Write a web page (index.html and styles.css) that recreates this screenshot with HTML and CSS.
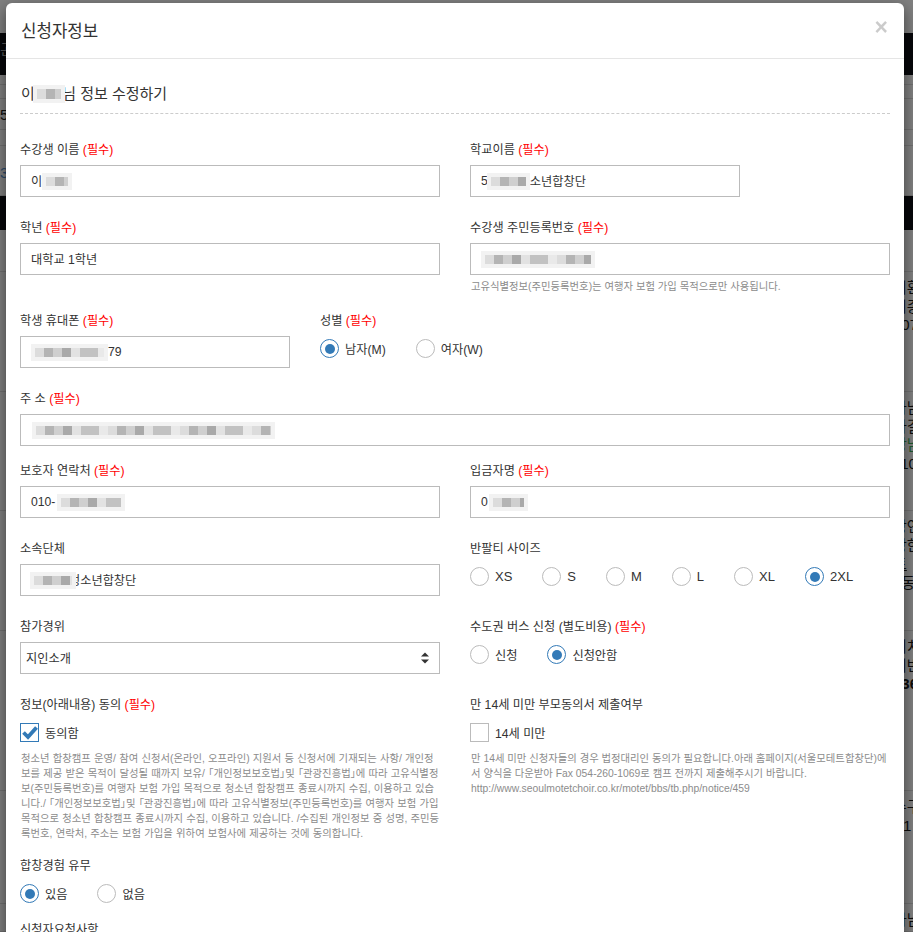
FILE: index.html
```html
<!DOCTYPE html>
<html lang="ko">
<head>
    <meta charset="UTF-8">
    <meta name="viewport" content="width=device-width, initial-scale=1.0">
    <title>신청자정보</title>
    <link rel="stylesheet" href="styles.css">
</head>
<body>
    <!-- dimmed page behind the modal -->
    <div class="backdrop">
        <div class="back-row h33"></div>
        <div class="back-bar h42"><span>곤</span></div>
        <div class="back-row h10"></div>
        <div class="back-row h14"></div>
        <div class="back-row h31"><span>5</span></div>
        <div class="back-row h16"></div>
        <div class="back-row h50"><span class="blue">3</span></div>
        <div class="back-bar h34"></div>
        <div class="back-row h42"></div>
        <div class="back-row h120"><span></span><span>기환<br>이종<br>207</span></div>
        <div class="back-row h119"><span></span><span>가남<br>사결<br><b class="green">강남</b><br>110</span></div>
        <div class="back-row h120"><span></span><span>강연<br>방한<br><u>트</u><br>3동</span></div>
        <div class="back-row h160"><span></span><span>위치<br>기반<br><b>236</b></span></div>
        <div class="back-row h113"><span></span><span>수구<br>--1</span></div>
        <div class="back-row h28"><span></span><span>가남</span></div>
    </div>

    <div class="modal">
        <div class="modal-header">
            <h4>신청자정보</h4>
            <button class="close" type="button">×</button>
        </div>
        <div class="modal-body">
            <h5 class="form-title">이<span class="mask mask-title"></span>님 정보 수정하기</h5>

            <div class="row">
                <div class="field">
                    <label>수강생 이름 <em>(필수)</em></label>
                    <div class="input">이<span class="mask mask-name"></span></div>
                </div>
                <div class="field">
                    <label>학교이름 <em>(필수)</em></label>
                    <div class="input short">5<span class="mask mask-school"></span>소년합창단</div>
                </div>
            </div>

            <div class="row tight">
                <div class="field">
                    <label>학년 <em>(필수)</em></label>
                    <div class="input">대학교 1학년</div>
                </div>
                <div class="field">
                    <label>수강생 주민등록번호 <em>(필수)</em></label>
                    <div class="input"><span class="mask mask-rrn"></span></div>
                    <p class="help">고유식별정보(주민등록번호)는 여행자 보험 가입 목적으로만 사용됩니다.</p>
                </div>
            </div>

            <div class="row phone-row">
                <div class="field">
                    <label>학생 휴대폰 <em>(필수)</em></label>
                    <div class="input"><span class="mask mask-phone"></span>79</div>
                </div>
                <div class="field">
                    <label>성별 <em>(필수)</em></label>
                    <div class="options">
                        <span class="option"><i class="radio on"></i>남자(M)</span>
                        <span class="option"><i class="radio"></i>여자(W)</span>
                    </div>
                </div>
            </div>

            <div class="row single address-row">
                <div class="field">
                    <label>주 소 <em>(필수)</em></label>
                    <div class="input"><span class="mask mask-address"></span></div>
                </div>
            </div>

            <div class="row">
                <div class="field">
                    <label>보호자 연락처 <em>(필수)</em></label>
                    <div class="input">010-<span class="mask mask-contact"></span></div>
                </div>
                <div class="field">
                    <label>입금자명 <em>(필수)</em></label>
                    <div class="input">0<span class="mask mask-payer"></span></div>
                </div>
            </div>

            <div class="row">
                <div class="field">
                    <label>소속단체</label>
                    <div class="input masked-first"><span class="mask mask-org"></span>청소년합창단</div>
                </div>
                <div class="field">
                    <label>반팔티 사이즈</label>
                    <div class="options sizes">
                        <span class="option"><i class="radio"></i>XS</span>
                        <span class="option"><i class="radio"></i>S</span>
                        <span class="option"><i class="radio"></i>M</span>
                        <span class="option"><i class="radio"></i>L</span>
                        <span class="option"><i class="radio"></i>XL</span>
                        <span class="option"><i class="radio on"></i>2XL</span>
                    </div>
                </div>
            </div>

            <div class="row">
                <div class="field">
                    <label>참가경위</label>
                    <div class="select-wrap">
                        <select class="input select">
                            <option>지인소개</option>
                        </select>
                        <svg class="select-arrows" width="10" height="12" viewBox="0 0 10 12">
                            <path d="M5 0.5 L9 4.5 H1 Z M1 7.5 H9 L5 11.5 Z" fill="#333"/>
                        </svg>
                    </div>
                </div>
                <div class="field">
                    <label>수도권 버스 신청 (별도비용) <em>(필수)</em></label>
                    <div class="options">
                        <span class="option"><i class="radio"></i>신청</span>
                        <span class="option"><i class="radio on"></i>신청안함</span>
                    </div>
                </div>
            </div>

            <div class="row agree-row">
                <div class="field">
                    <label>정보(아래내용) 동의 <em>(필수)</em></label>
                    <div class="options">
                        <span class="option">
                            <i class="check on">
                                <svg width="17" height="17" viewBox="0 0 17 17">
                                    <path d="M2.5 8.5 L7 13 L15.5 3.5" fill="none" stroke="#337ab7" stroke-width="3.8"/>
                                </svg>
                            </i>동의함
                        </span>
                    </div>
                    <p class="help notice notice-wide">청소년 합창캠프 운영/ 참여 신청서(온라인, 오프라인) 지원서 등 신청서에 기재되는 사항/ 개인정보를 제공 받은 목적이 달성될 때까지 보유/ 「개인정보보호법」및 「관광진흥법」에 따라 고유식별정보(주민등록번호)를 여행자 보험 가입 목적으로 청소년 합창캠프 종료시까지 수집, 이용하고 있습니다./ 「개인정보보호법」및 「관광진흥법」에 따라 고유식별정보(주민등록번호)를 여행자 보험 가입 목적으로 청소년 합창캠프 종료시까지 수집, 이용하고 있습니다. /수집된 개인정보 중 성명, 주민등록번호, 연락처, 주소는 보험 가입을 위하여 보험사에 제공하는 것에 동의합니다.</p>
                </div>
                <div class="field">
                    <label>만 14세 미만 부모동의서 제출여부</label>
                    <div class="options">
                        <span class="option"><i class="check"></i>14세 미만</span>
                    </div>
                    <p class="help notice">만 14세 미만 신청자들의 경우 법정대리인 동의가 필요합니다.아래 홈페이지(서울모테트합창단)에서 양식을 다운받아 Fax 054-260-1069로 캠프 전까지 제출해주시기 바랍니다.<br>http://www.seoulmotetchoir.co.kr/motet/bbs/tb.php/notice/459</p>
                </div>
            </div>

            <div class="row single choir-row">
                <div class="field">
                    <label>합창경험 유무</label>
                    <div class="options">
                        <span class="option"><i class="radio on"></i>있음</span>
                        <span class="option"><i class="radio"></i>없음</span>
                    </div>
                </div>
            </div>

            <div class="row single">
                <div class="field">
                    <label>신청자요청사항</label>
                </div>
            </div>
        </div>
    </div>
</body>
</html>
```

FILE: styles.css
```css
* {
    box-sizing: border-box;
}

html, body {
    height: 100%;
    margin: 0;
    overflow: hidden;
}

body {
    position: relative;
    padding: 3px 9px 0 6px;
    background-color: #808080;
    color: #333333;
    font-family: "Liberation Sans", "Noto Sans CJK KR", sans-serif;
    font-size: 12.2px;
}

/* dimmed page */
.backdrop {
    position: absolute;
    top: 0;
    left: 0;
    width: 100%;
    height: 100%;
    font-size: 15px;
    line-height: 18.7px;
    color: #0d0d0d;
}

.back-row, .back-bar {
    display: flex;
    justify-content: space-between;
    align-items: flex-start;
    overflow: hidden;
}

.back-row {
    border-bottom: 1px solid #707070;
    padding-top: 7px;
}

.back-row span:last-child:not(:first-child) {
    width: 20px;
    white-space: nowrap;
}

.back-bar {
    background-color: #06070a;
    color: #555555;
    padding-top: 8px;
}

.back-row.h33 { border-bottom: none; }

.h10 { height: 10px; padding-top: 0; }
.h14 { height: 14px; padding-top: 0; }
.h16 { height: 16px; padding-top: 0; }
.h28 { height: 28px; }
.h31 { height: 31px; }
.h33 { height: 33px; }
.h34 { height: 34px; }
.h42 { height: 42px; }
.h50 { height: 50px; padding-top: 18px; }
.h113 { height: 113px; }
.h119 { height: 119px; }
.h120 { height: 120px; }
.h160 { height: 160px; }

.blue { color: #2a4a6b; }
.green { color: #1e5a2e; font-weight: normal; }

.modal {
    position: relative;
    background-color: #ffffff;
    border-radius: 6px 6px 0 0;
    box-shadow: 0 5px 15px rgba(0, 0, 0, 0.5);
    height: 1000px;
}

.modal-header {
    display: flex;
    justify-content: space-between;
    align-items: center;
    height: 56px;
    padding: 0 15px 2px;
    border-bottom: 1px solid #e5e5e5;
}

.modal-header h4 {
    margin: 0;
    font-size: 16.8px;
    font-weight: normal;
}

.close {
    border: none;
    background: none;
    padding: 0;
    margin: -4px 1px 0 0;
    color: #000000;
    opacity: 0.2;
    font-family: "Liberation Sans", sans-serif;
    font-size: 23px;
    font-weight: bold;
    line-height: 1;
}

.modal-body {
    padding: 0 14px;
}

.form-title {
    margin: 0 0 26px;
    height: 55px;
    padding: 25px 1px 0;
    border-bottom: 1px dashed #cccccc;
    font-size: 15px;
    font-weight: normal;
    line-height: 20px;
}

.row {
    display: grid;
    grid-template-columns: 420px 420px;
    column-gap: 30px;
    margin-bottom: 21px;
}

.row.single {
    grid-template-columns: 870px;
}

.row.tight {
    margin-bottom: 17px;
}

.row.phone-row {
    grid-template-columns: 270px 1fr;
    margin-bottom: 21px;
}

.row.address-row {
    margin-bottom: 15px;
}

.row.agree-row {
    margin-bottom: 15px;
}

.row.choir-row {
    margin-bottom: 17px;
}

label {
    display: block;
    height: 18px;
    margin-bottom: 7px;
    line-height: 20px;
}

label em {
    color: #ff0000;
    font-style: normal;
}

.input {
    display: flex;
    align-items: center;
    width: 100%;
    height: 32px;
    padding: 0 10px;
    border: 1px solid #bbbbbb;
    background-color: #ffffff;
    color: #333333;
    white-space: nowrap;
}

.input.short {
    width: 270px;
}

.select-wrap {
    position: relative;
}

.select {
    display: block;
    appearance: none;
    border-radius: 0;
    padding: 2px 5px 0;
    font-family: inherit;
    font-size: 12.2px;
}

.select-arrows {
    position: absolute;
    top: 10px;
    right: 10px;
}

.options {
    display: flex;
    padding-top: 3px;
    height: 22px;
}

.options.sizes {
    font-size: 13px;
}

.option {
    display: flex;
    align-items: center;
    gap: 6px;
    margin-right: 30px;
}

.radio, .check {
    display: flex;
    align-items: center;
    justify-content: center;
    flex: none;
    width: 19px;
    height: 19px;
    border: 1px solid #bbbbbb;
    background-color: #ffffff;
}

.radio {
    border-radius: 50%;
}

.radio.on, .check.on {
    border-color: #337ab7;
}

.radio.on::after {
    content: "";
    width: 10px;
    height: 10px;
    border-radius: 50%;
    background-color: #337ab7;
}

.help {
    margin: 4px 0 0;
    padding-left: 1px;
    color: #8c8c8c;
    font-size: 10.35px;
    font-feature-settings: "palt";
    line-height: 15px;
    word-break: break-all;
}

.help.notice {
    margin-top: 9px;
}

.help.notice-wide {
    word-spacing: 0.35px;
}

/* blurred out personal details */
.mask {
    display: inline-block;
    flex: none;
    height: 9px;
    background: repeating-linear-gradient(90deg, #dcdcdc 0 9px, #b4b4b4 9px 18px, #cfcfcf 18px 27px, #a9a9a9 27px 36px, #e2e2e2 36px 45px, #c2c2c2 45px 63px, #e9e9e9 63px 72px);
    box-shadow: 0 0 0 4px #f2f2f2;
    filter: blur(0.6px);
}

.mask-title { width: 24px; height: 10px; margin: 0 1.4px 0 2px; }
.mask-name { width: 22px; margin-left: 4px; }
.mask-school { width: 35px; margin: 0 4px 0 3px; }
.mask-rrn { width: 106px; margin-left: 4px; }
.mask-phone { width: 69px; margin: 0 4px; }
.mask-address { width: 235px; margin-left: 5px; }
.mask-contact { width: 60px; margin-left: 6px; }
.mask-payer { width: 31px; margin-left: 5px; }
.mask-org { width: 38px; margin: 0 -3px 0 4px; }

.masked-first {
    padding-left: 9px;
}
```
